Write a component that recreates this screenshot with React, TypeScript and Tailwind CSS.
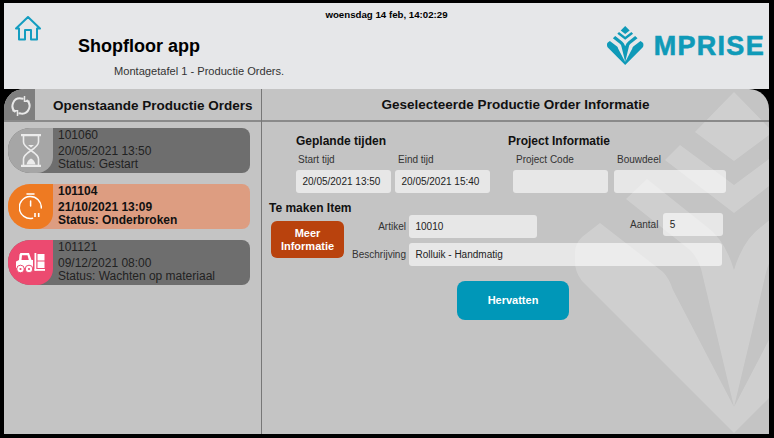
import React from "react";

const MARK =
  "M734 92L773 132L734 161L695 132Z " +
  "M680 145L734 185L788 145L803 160L734 213L665 160Z " +
  "M647 179L707 227Q725 240 734 270L734 407L703 277Q700 260 690 250L626 199Z " +
  "M821 179L761 227Q743 240 734 270L734 407L765 277Q768 260 778 250L842 199Z " +
  "M600 223L663 272Q669 278 673 290L734 407L734 433L582 281Q575 272 575 262L575 252Q575 244 582 237Z " +
  "M868 223L805 272Q799 278 795 290L734 407L734 433L886 281Q893 272 893 262L893 252Q893 244 886 237Z";

function Mark({ className }: { className: string }) {
  return (
    <svg viewBox="575 92 318 341" className={className} fill="currentColor" fillRule="nonzero">
      <path d={MARK} />
    </svg>
  );
}

function Home() {
  return (
    <svg viewBox="0 0 26 25" className="h-[25px] w-[26px] text-[#149dc0]" fill="none" stroke="currentColor" strokeWidth="2" strokeLinejoin="round">
      <path d="M1 12.5L13 1L25 12.5L22 12.5L22 23.5L16 23.5L16 14L10 14L10 23.5L4 23.5L4 12.5Z" />
    </svg>
  );
}

function Refresh() {
  return (
    <svg viewBox="0 0 20 20" className="ml-[3px] mt-[2px] h-[20px] w-[20px] text-[#e8e8e8]" fill="none" stroke="currentColor" strokeWidth="2">
      <path d="M4.5 16A7.6 7.6 0 0 1 10 2.4L12.5 2.8" />
      <path d="M15.5 4A7.6 7.6 0 0 1 10 17.6L7.5 17.2" />
      <path d="M13.5 0L13.5 5.2L18.5 5.2" strokeWidth="1.5" />
      <path d="M6.5 20L6.5 14.8L1.5 14.8" strokeWidth="1.5" />
    </svg>
  );
}

function Hourglass() {
  return (
    <svg viewBox="0 0 20 33" className="h-[33px] w-[20px] text-[#ececec]" fill="none" stroke="currentColor" strokeWidth="1.6">
      <path d="M0 1.2H20M0 31.8H20" strokeWidth="2.2" />
      <path d="M2.5 1V8Q2.5 11.5 10 16.5Q2.5 21.5 2.5 25V32M17.5 1V8Q17.5 11.5 10 16.5Q17.5 21.5 17.5 25V32" />
      <path d="M5.5 30.5Q6.5 26 10 24.5Q13.5 26 14.5 30.5Z" fill="currentColor" stroke="none" />
      <path d="M7 11H13L10 13.5Z" fill="currentColor" stroke="none" />
    </svg>
  );
}

function TimerIcon() {
  return (
    <svg viewBox="0 0 23 27" className="h-[27px] w-[23px] text-white" fill="none" stroke="currentColor" strokeWidth="1.5" strokeLinecap="round">
      <path d="M8 1H15" />
      <path d="M13.5 25.3A11 11 0 1 1 22.3 15" />
      <path d="M11.6 8V13" />
      <path d="M16 20V24M19.7 20V24" strokeLinecap="butt" strokeWidth="1.6" />
    </svg>
  );
}

function Forklift() {
  return (
    <svg viewBox="0 0 29 20" className="h-[20px] w-[29px] text-white" fill="currentColor">
      <path d="M4.5 0H13L15.5 7H17V15H0V8.5L3 7L3.5 1.5Z M6 2.2L5.5 7H12.8L11.5 2.2Z" fillRule="evenodd" />
      <circle cx="4.5" cy="16" r="3.8" stroke="#ec4a70" strokeWidth="1" />
      <circle cx="13" cy="16" r="3.8" stroke="#ec4a70" strokeWidth="1" />
      <circle cx="4.5" cy="16" r="1.1" fill="#ec4a70" />
      <circle cx="13" cy="16" r="1.1" fill="#ec4a70" />
      <rect x="18.5" y="0" width="1.8" height="17.5" />
      <rect x="18.5" y="16" width="10.5" height="1.8" />
      <rect x="21.5" y="1" width="7" height="6.5" />
      <rect x="21.5" y="8.5" width="7" height="6.5" />
    </svg>
  );
}

function Card({ icon, tone, card, bold, lines }: { icon: React.ReactNode; tone: string; card: string; bold?: boolean; lines: string[] }) {
  return (
    <div className={`flex h-[45px] w-[242px] rounded-[8px] rounded-l-[22px] ${card}`}>
      <div className={`flex h-[45px] w-[45px] shrink-0 items-center justify-center rounded-l-[22px] rounded-br-[16px] ${tone}`}>{icon}</div>
      <div className={`pl-[5px] text-[12px] leading-[14px] ${bold ? "font-bold text-[#111]" : "text-[#222]"}`}>
        <div>{lines[0]}</div>
        <div className="mt-[2px]">{lines[1]}</div>
        <div className="-mt-[1px]">{lines[2]}</div>
      </div>
    </div>
  );
}

function Field({ w, children, className = "" }: { w: string; children?: React.ReactNode; className?: string }) {
  return <div className={`${w} ${className} flex h-[23px] items-center rounded-[3px] bg-white/60 pl-[6.5px] text-[10px] text-[#222]`}>{children}</div>;
}

export default function App() {
  return (
    <div className="flex h-[438px] w-[774px] flex-col bg-black pb-[4px] pl-[4px] pr-[5px] pt-[3px] font-['Liberation_Sans',Arial,sans-serif] text-[#111]">
      <header className="grid h-[86px] shrink-0 grid-cols-3 bg-[#e6e7e9]">
        <div className="whitespace-nowrap">
          <div className="pl-[11px] pt-[13px]"><Home /></div>
          <div className="-mt-[5px] pl-[74px] text-[18px] font-bold leading-[21px] text-black">Shopfloor app</div>
          <div className="pl-[110px] pt-[8px] text-[11.1px] leading-[13px] text-[#333]">Montagetafel 1 - Productie Orders.</div>
        </div>
        <div className="whitespace-nowrap pt-[6px] text-center text-[9.7px] font-bold leading-[12px] text-black">woensdag 14 feb, 14:02:29</div>
        <div className="flex items-start justify-end gap-[10px] pr-[4px] pt-[23px] text-[#0f9ab8]">
          <Mark className="h-[39px] w-[36.4px]" />
          <span className="mt-[5px] text-[27px] font-bold leading-[31px] tracking-[1.3px] [-webkit-text-stroke:0.6px_#0f9ab8]">MPRISE</span>
        </div>
      </header>

      <main className="relative flex min-h-0 flex-1 overflow-hidden rounded-t-[20px] bg-[#c4c4c4]">
        <Mark className="pointer-events-none absolute left-[571px] top-[3px] h-[341px] w-[318px] text-white/20" />

        <section className="relative flex w-[258px] shrink-0 flex-col border-r border-[#777]">
          <div className="flex h-[33px] shrink-0 items-stretch border-b-2 border-[#8a8a8a]">
            <div className="flex w-[31px] items-center justify-center bg-[#7f7f7f]"><Refresh /></div>
            <div className="whitespace-nowrap pl-[18px] pt-[9px] text-[13.5px] font-bold leading-[16px] text-[#111]">Openstaande Productie Orders</div>
          </div>
          <div className="flex flex-col gap-[11px] pl-[4px] pt-[6px]">
            <Card icon={<Hourglass />} tone="bg-[#a6a6a6]" card="bg-[#6e6e6e]" lines={["101060", "20/05/2021 13:50", "Status: Gestart"]} />
            <Card icon={<TimerIcon />} tone="bg-[#ee7a22]" card="bg-[#dd9d81]" bold lines={["101104", "21/10/2021 13:09", "Status: Onderbroken"]} />
            <Card icon={<Forklift />} tone="bg-[#ec4a70]" card="bg-[#6e6e6e]" lines={["101121", "09/12/2021 08:00", "Status: Wachten op materiaal"]} />
          </div>
        </section>

        <section className="relative flex min-w-0 flex-1 flex-col">
          <div className="h-[33px] shrink-0 whitespace-nowrap border-b-2 border-[#8a8a8a] pt-[8px] text-center text-[13.5px] font-bold leading-[16px] text-[#111]">Geselecteerde Productie Order Informatie</div>

          <div className="flex pl-[34px] pt-[12px]">
            <div className="w-[212px]">
              <div className="text-[12px] font-bold leading-[14px]">Geplande tijden</div>
              <div className="mt-[6px] flex text-[10px] leading-[12px] text-[#333]">
                <span className="w-[99px] pl-[2px]">Start tijd</span>
                <span className="pl-[3px]">Eind tijd</span>
              </div>
              <div className="mt-[4px] flex gap-[4px]">
                <Field w="w-[95px]">20/05/2021 13:50</Field>
                <Field w="w-[95px]">20/05/2021 15:40</Field>
              </div>
            </div>
            <div>
              <div className="text-[12px] font-bold leading-[14px]">Project Informatie</div>
              <div className="mt-[6px] flex text-[10px] leading-[12px] text-[#333]">
                <span className="w-[109px] pl-[8px]">Project Code</span>
                <span>Bouwdeel</span>
              </div>
              <div className="mt-[4px] flex gap-[6px] pl-[5px]">
                <Field w="w-[95px]" />
                <Field w="w-[112px]" />
              </div>
            </div>
          </div>

          <div className="flex pl-[7px] pt-[8px]">
            <div className="w-[81px] shrink-0">
              <div className="whitespace-nowrap text-[12px] font-bold leading-[14px]">Te maken Item</div>
              <div className="ml-[2px] mt-[6px] flex h-[37px] w-[73px] items-center justify-center rounded-[6px] bg-[#b9420d] text-center text-[11px] font-bold leading-[13px] text-white">Meer<br />Informatie</div>
            </div>
            <div className="relative pt-[14px] text-[10px] text-[#333]">
              <div className="flex items-center">
                <span className="w-[56px] text-right">Artikel</span>
                <Field w="w-[128px]" className="ml-[3px]">10010</Field>
                <span className="-mt-[4px] ml-[93px]">Aantal</span>
                <Field w="w-[60px]" className="-mt-[4px] ml-[5px]">5</Field>
              </div>
              <div className="mt-[5px] flex items-center">
                <span className="w-[56px] whitespace-nowrap text-right">Beschrijving</span>
                <Field w="w-[313px]" className="ml-[3px]">Rolluik - Handmatig</Field>
              </div>
            </div>
          </div>

          <div className="pl-[195px] pt-[15px]">
            <div className="flex h-[39px] w-[112px] items-center justify-center rounded-[8px] bg-[#0097b8] text-[11px] font-bold text-white">Hervatten</div>
          </div>
        </section>
      </main>
    </div>
  );
}
